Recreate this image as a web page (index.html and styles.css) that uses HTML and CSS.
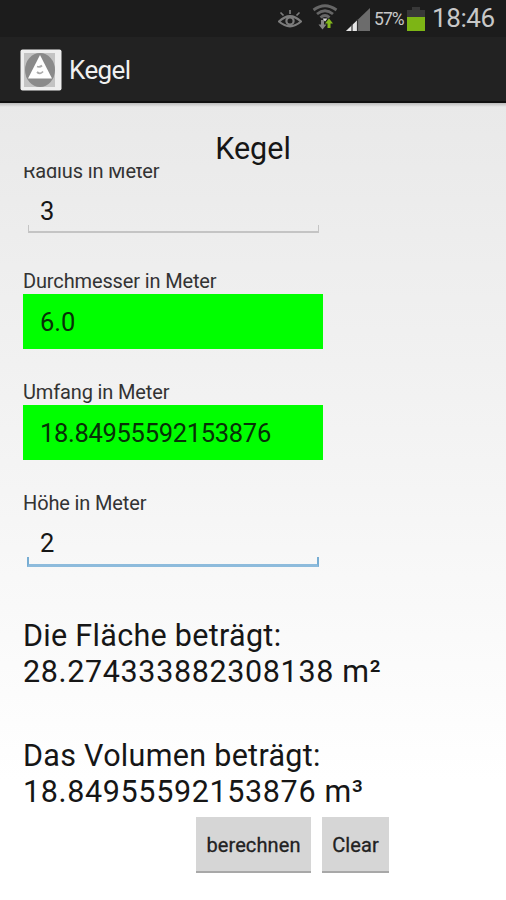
FILE: index.html
```html
<!DOCTYPE html>
<html lang="de">
<head>
<meta charset="utf-8">
<title>Kegel</title>
<link rel="stylesheet" href="styles.css">
</head>
<body>
<div class="status">
  <svg class="eye" width="24" height="20" viewBox="0 0 24 20" fill="none" stroke="#7c7c7c" stroke-width="2.2"><path d="M1 12.500Q12 2 23 12.500Q12 22 1 12.500Z"/><circle cx="12" cy="12" r="3.600"/><path d="M12 1v4M2.500 3.500l3 3M21.500 3.500l-3 3" stroke-width="1.700"/></svg>
  <svg class="wifi" width="26" height="26" viewBox="0 0 26 26" fill="none"><path d="M1.500 6Q13-2.500 24.500 6M5 10Q13 3.500 21 10M8.500 13.500Q13 9.500 17.500 13.500" stroke="#666" stroke-width="2.800"/><path d="M13 17.500l-2.500-3h5z" fill="#ddd"/><path d="M9 16v4.500H6.500l4 5 4-5h-2.500V16z" fill="#858585"/><path d="M15.500 24v-4.500H13l4-5 4 5h-2.500V24z" fill="#83b81c"/></svg>
  <svg class="signal" width="24" height="23" viewBox="0 0 24 23"><path d="M0 23L24 0V23Z" fill="#6c6c6c"/><path d="M0 23L12 11.500V23Z" fill="#e6e6e6"/><path d="M6 16v7M11.500 11v12" stroke="#333" stroke-width="1.200"/></svg>
  <span class="percent">57%</span>
  <svg class="battery" width="18" height="24" viewBox="0 0 18 24"><path d="M5 0h8v3h5v21H0V3h5z" fill="#383838"/><path d="M0 10h18v14H0z" fill="#7db515"/></svg>
  <span class="clock">18:46</span>
</div>
<header class="bar">
  <svg width="42" height="42" viewBox="0 0 42 42"><rect x=".5" y=".5" width="41" height="41" rx="2" fill="#eee"/><rect x="4" y="4" width="31" height="34" fill="#c3c3c3"/><ellipse cx="20" cy="21" rx="15" ry="17" fill="#8a8a8a"/><path d="M20 6L32 29.500H8Z" fill="#fff"/><path d="M17 17.500q3 1 5-1M17 23q3 3 6-.500" stroke="#aaa" stroke-width="1.800" fill="none"/></svg>
  <span class="app">Kegel</span>
</header>
<main class="content">
  <h1 class="title">Kegel</h1>
  <div class="scroll">
    <div class="row"><div class="label">Radius in Meter</div><div class="field line">3</div></div>
    <div class="row"><div class="label">Durchmesser in Meter</div><div class="field green">6.0</div></div>
    <div class="row"><div class="label">Umfang in Meter</div><div class="field green long">18.84955592153876</div></div>
    <div class="row"><div class="label">Höhe in Meter</div><div class="field line focus">2</div></div>
    <div class="result"><div class="caption">Die Fläche beträgt:</div><div class="number">28.274333882308138 m²</div></div>
    <div class="result"><div class="caption">Das Volumen beträgt:</div><div class="number">18.84955592153876 m³</div></div>
  </div>
  <div class="buttons"><button class="b1">berechnen</button><button class="b2">Clear</button></div>
</main>
</body>
</html>
```
FILE: styles.css
```css
* { box-sizing: border-box; }
body { margin: 0; width: 506px; height: 900px; overflow: hidden; display: flex; flex-direction: column; font-family: Roboto, "Liberation Sans", sans-serif; color: #161616; background: #fff; }
.status { height: 37px; background: #1c1c1c; display: flex; align-items: flex-start; padding-left: 278px; flex: none; color: #c8c8c8; white-space: nowrap; }
.status svg { flex: none; }
.eye { margin-top: 9px; }
.wifi { margin: 4px 0 0 10px; }
.signal { margin: 8px 0 0 8px; }
.percent { font-size: 17.5px; line-height: 24px; margin: 7px 0 0 4px; width: 30px; letter-spacing: -.9px; }
.battery { margin: 7px 0 0 3px; }
.clock { font-size: 26px; line-height: 30px; margin: 3px 0 0 7px; letter-spacing: -.4px; }
.bar { height: 66px; flex: none; background: #222; border-bottom: 2px solid #101010; display: flex; align-items: center; padding: 2px 0 0 20px; }
.app { font-size: 26px; margin-left: 7px; color: #f0f0f0; letter-spacing: -.6px; }
.content { flex: 1; background: linear-gradient(#bbb, rgba(233,233,233,0) 4px), linear-gradient(#e9e9e9, #f4f4f4 45%, #fff 85%); padding-top: 28px; display: flex; flex-direction: column; }
.title { margin: 0; font-size: 30.5px; font-weight: 400; line-height: 36px; text-align: center; flex: none; }
.scroll { height: 641px; flex: none; overflow: hidden; padding-left: 23px; }
.row { height: 110.67px; }
.row:first-child { margin-top: -8.3px; }
.label { font-size: 20px; line-height: 24px; height: 24px; color: #333; white-space: nowrap; letter-spacing: -.14px; }
.field { width: 299.5px; height: 55px; margin-top: .5px; padding-left: 17px; font-size: 25.5px; line-height: 56px; }
.green { background: #0f0; color: #073007; }
.long { letter-spacing: -.3px; }
.line { position: relative; }
.line::after { content: ""; position: absolute; left: 5px; right: 4px; bottom: 5px; height: 6px; border: 1px solid #c4c4c4; border-bottom-width: 2px; border-top: 0; }
.focus::after { border: 2px solid #77add3; border-bottom: 3px solid #8dbbdc; border-top: 0; bottom: 3px; height: 7px; left: 4px; }
.result { font-size: 30.5px; line-height: 36.4px; height: 120px; white-space: nowrap; }
.row + .result { margin-top: 16.3px; }
.caption { letter-spacing: .3px; }
.number { letter-spacing: .64px; }
.buttons { display: flex; gap: 11px; padding: 9px 0 0 196px; }
button { font: 400 20px Roboto, sans-serif; letter-spacing: .1px; -webkit-text-stroke: .3px #222; color: #222; background: #d6d6d6; border: 0; border-bottom: 2px solid #a8a8a8; height: 56px; padding: 1px 0 0; }
.b1 { width: 115px; }
.b2 { width: 67px; }
```
